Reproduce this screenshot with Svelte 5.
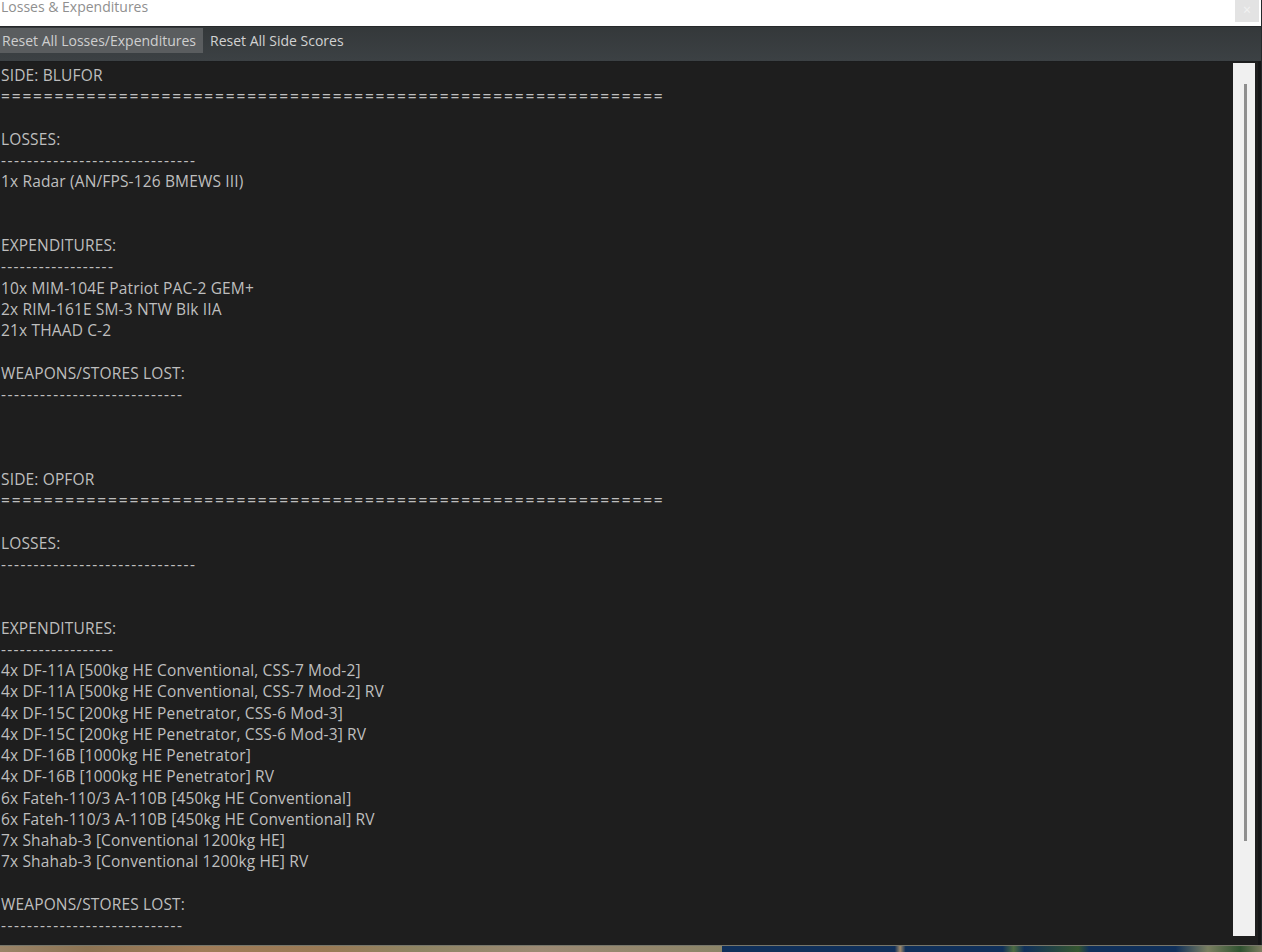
<script>
  const eq = { text: "=".repeat(62), kind: "eq" };
  const d30 = { text: "-".repeat(30), kind: "dash" };
  const d18 = { text: "-".repeat(18), kind: "dash short" };
  const d28 = { text: "-".repeat(28), kind: "dash" };
  const raw = [
    "SIDE: BLUFOR", eq, "", "LOSSES:", d30, "1x Radar (AN/FPS-126 BMEWS III)", "", "",
    "EXPENDITURES:", d18, "10x MIM-104E Patriot PAC-2 GEM+", "2x RIM-161E SM-3 NTW Blk IIA", "21x THAAD C-2", "",
    "WEAPONS/STORES LOST:", d28, "", "", "",
    "SIDE: OPFOR", eq, "", "LOSSES:", d30, "", "",
    "EXPENDITURES:", d18,
    "4x DF-11A [500kg HE Conventional, CSS-7 Mod-2]",
    "4x DF-11A [500kg HE Conventional, CSS-7 Mod-2] RV",
    "4x DF-15C [200kg HE Penetrator, CSS-6 Mod-3]",
    "4x DF-15C [200kg HE Penetrator, CSS-6 Mod-3] RV",
    "4x DF-16B [1000kg HE Penetrator]",
    "4x DF-16B [1000kg HE Penetrator] RV",
    "6x Fateh-110/3 A-110B [450kg HE Conventional]",
    "6x Fateh-110/3 A-110B [450kg HE Conventional] RV",
    "7x Shahab-3 [Conventional 1200kg HE]",
    "7x Shahab-3 [Conventional 1200kg HE] RV",
    "", "WEAPONS/STORES LOST:", d28
  ];
  const lines = raw.map((l) => (typeof l === "string" ? { text: l, kind: "" } : l));
</script>

<div class="page">
  <div class="window">
    <header class="title">
      <span class="title-text">Losses &amp; Expenditures</span>
      <span class="close">×</span>
    </header>
    <nav class="toolbar">
      <button class="tool first">Reset All Losses/Expenditures</button>
      <button class="tool second">Reset All Side Scores</button>
    </nav>
    <div class="body">
      <div class="log">
        {#each lines as line}
          <div class="line {line.kind}">{line.text}</div>
        {/each}
      </div>
      <div class="scroll"><div class="thumb"></div></div>
    </div>
  </div>
  <div class="map"><div class="land"></div><div class="sea"></div></div>
</div>

<style>
  :global(body) { margin: 0; background: #24292b; }
  .page { width: 1262px; height: 952px; display: flex; flex-direction: column; overflow: hidden; font-family: "Open Sans", "Noto Sans", sans-serif; }
  .window { height: 945px; width: 1261px; flex: none; background: #1e1e1e; display: flex; flex-direction: column; border-right: 1px solid #24292b; }
  .title { height: 26px; background: #fff; display: flex; justify-content: space-between; flex: none; }
  .title-text { font-size: 14px; line-height: 14px; color: #8f8f8f; padding-left: 1px; }
  .close { width: 24px; height: 22px; margin-right: 2px; background: #e3e3e3; color: #f2f2f2; font-size: 14px; line-height: 20px; text-align: center; }
  .toolbar { height: 35px; background: linear-gradient(#34383a, #3c4144); border-top: 1px solid #26282a; box-sizing: border-box; display: flex; align-items: flex-start; padding-top: 1px; flex: none; }
  .tool { font: inherit; font-size: 14px; line-height: 25px; height: 25px; color: #d2d2d2; background: transparent; border: 0; margin: 0; white-space: nowrap; }
  .first { padding: 0 7px 0 2px; background: #5a5d5f; color: #cfcfcf; }
  .second { padding: 0 7px; }
  .body { flex: 1; min-height: 0; display: flex; background: #1e1e1e; border-top: 1px solid #1b1c1d; border-right: 3px solid #161718; }
  .log { flex: 1; overflow: hidden; color: #bebebe; font-size: 15.5px; letter-spacing: 0.15px; padding: 3px 0 0 1px; }
  .line { height: 21.25px; line-height: 21.25px; white-space: pre; }
  .eq { letter-spacing: 1.84px; }
  .dash { letter-spacing: 1.53px; }
  .short { letter-spacing: 1.3px; }
  .scroll { width: 22px; height: 873px; background: #f0f0f0; margin: 1px 3px 0 0; flex: none; position: relative; }
  .thumb { position: absolute; left: 11px; top: 21px; width: 3px; height: 757px; background: #8e8e8e; }
  .map { flex: 1; display: flex; border-top: 1px solid #77766a; }
  .land { width: 722px; background: linear-gradient(90deg, #9a8468, #8d7453 12%, #a07c58 28%, #9a7a55 45%, #8f8564 58%, #9c8a74 75%, #8c8568 100%); }
  .sea { flex: 1; background: linear-gradient(90deg, #10305a 0, #10305a 32%, #a08a6a 33%, #10305a 34%, #10305a 52%, #4c6b40 54%, #10305a 56%, #35562f 66%, #10305a 68%, #10305a 84%, #7a7f60 90%, #2f5230 96%, #7d7d60 100%); }
</style>
